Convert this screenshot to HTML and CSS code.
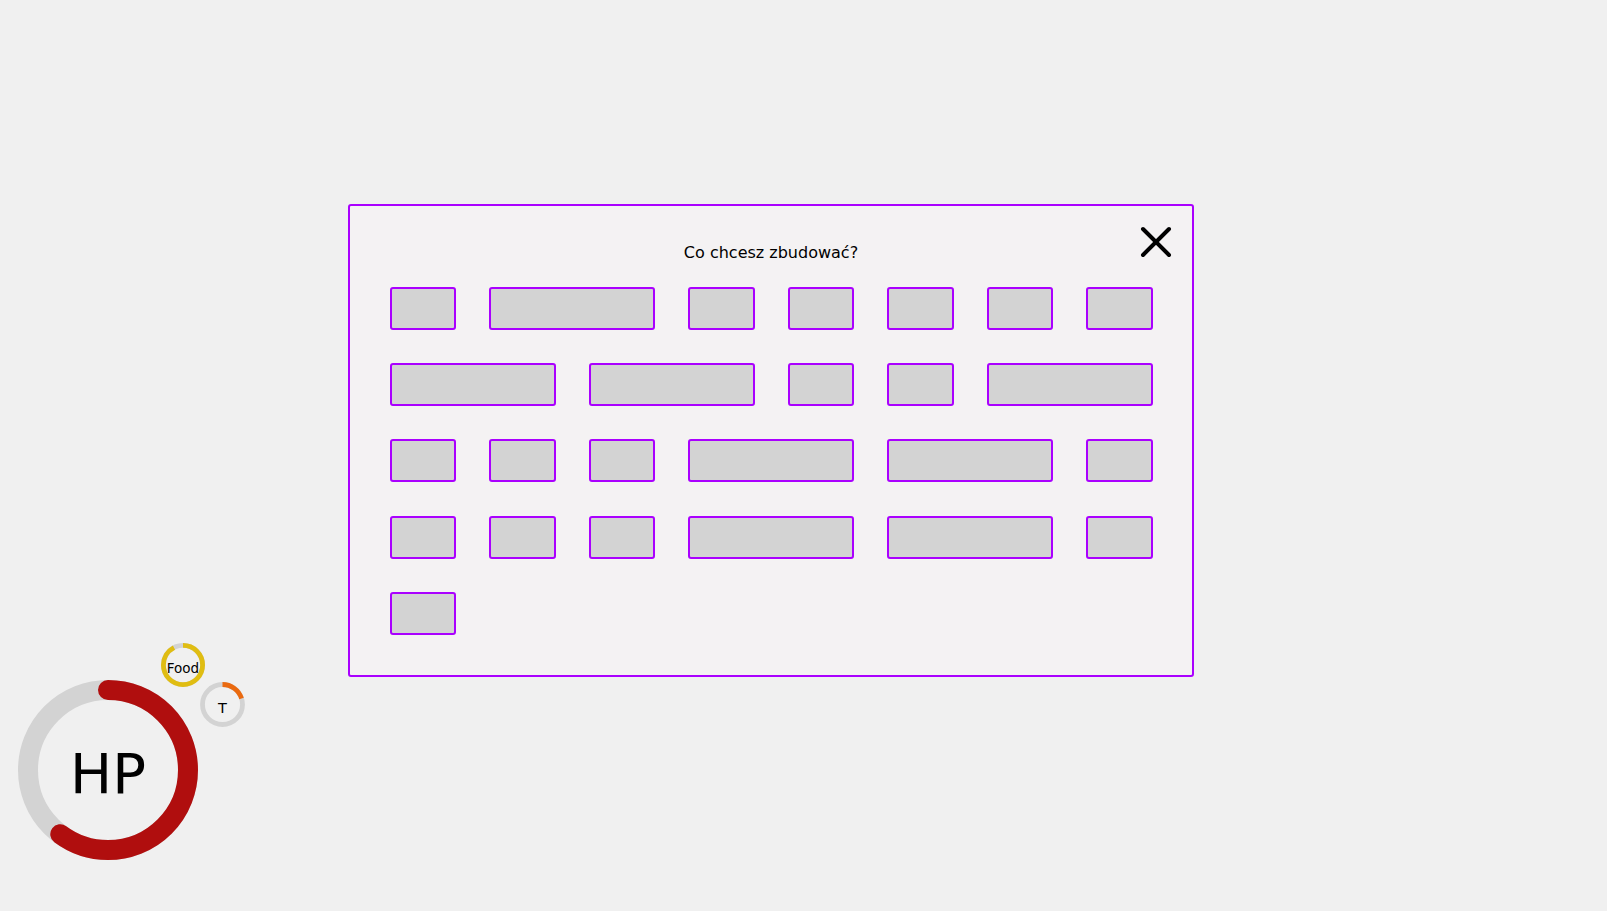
FILE: index.html
```html
<!DOCTYPE html>
<html>
    <head>
        <title>Budowanie</title>
        <link rel="stylesheet" href="styles.css">
    </head>
    <body>
    <div class="build">
        <button class="close" aria-label="Zamknij">
            <svg width="32" height="32" viewBox="0 0 32 32">
                <path d="M3 3 L29 29 M29 3 L3 29" stroke="#000" stroke-width="4" stroke-linecap="round" fill="none"/>
            </svg>
        </button>
        <p class="title">Co chcesz zbudować?</p>
        <div class="options">
            <button class="opt"></button>
            <button class="opt wide"></button>
            <button class="opt"></button>
            <button class="opt"></button>
            <button class="opt"></button>
            <button class="opt"></button>
            <button class="opt"></button>

            <button class="opt wide"></button>
            <button class="opt wide"></button>
            <button class="opt"></button>
            <button class="opt"></button>
            <button class="opt wide"></button>

            <button class="opt"></button>
            <button class="opt"></button>
            <button class="opt"></button>
            <button class="opt wide"></button>
            <button class="opt wide"></button>
            <button class="opt"></button>

            <button class="opt"></button>
            <button class="opt"></button>
            <button class="opt"></button>
            <button class="opt wide"></button>
            <button class="opt wide"></button>
            <button class="opt"></button>

            <button class="opt"></button>
        </div>
    </div>

    <div class="hud">
        <div class="ring hp">
            <svg width="180" height="180" viewBox="0 0 180 180">
                <circle cx="90" cy="90" r="80" stroke="#d3d3d3" stroke-width="20" fill="none"/>
                <circle cx="90" cy="90" r="80" stroke="#b00e0e" stroke-width="20" fill="none"
                    stroke-linecap="round" stroke-dasharray="302 600" transform="rotate(-90 90 90)"/>
            </svg>
            <span>HP</span>
        </div>
        <div class="ring food">
            <svg width="44" height="44" viewBox="0 0 44 44">
                <circle cx="22" cy="22" r="19.6" stroke="#d3d3d3" stroke-width="4.8" fill="none"/>
                <circle cx="22" cy="22" r="19.6" stroke="#e0bd12" stroke-width="4.8" fill="none"
                    stroke-dasharray="113 200" transform="rotate(-90 22 22)"/>
            </svg>
            <span>Food</span>
        </div>
        <div class="ring temp">
            <svg width="45" height="45" viewBox="0 0 45 45">
                <circle cx="22.5" cy="22.5" r="20" stroke="#d3d3d3" stroke-width="4.8" fill="none"/>
                <circle cx="22.5" cy="22.5" r="20" stroke="#ea6a10" stroke-width="4.8" fill="none"
                    stroke-dasharray="25 200" transform="rotate(-90 22.5 22.5)"/>
            </svg>
            <span>T</span>
        </div>
    </div>
    </body>
</html>
```

FILE: styles.css
```css
body{
    margin: 0;
    font-family: "DejaVu Sans", Verdana, sans-serif;
    background-color: #f0f0f0;
}
.build{
    position: relative;
    box-sizing: border-box;
    width: 846px;
    height: 473px;
    margin: 204px 0 0 348px;
    padding: 37px 0 0 0;
    background-color: #f4f2f3;
    border: 2px solid #a0f;
    border-radius: 3px;
}
.build .title{
    margin: 0 0 25px 0;
    font-size: 16px;
    line-height: 19px;
    text-align: center;
    color: #000;
}
.build .close{
    position: absolute;
    top: 19px;
    right: 19px;
    width: 34px;
    height: 34px;
    padding: 1px;
    border: none;
    background: none;
}
.options{
    display: grid;
    grid-template-columns: repeat(8, 66.5px);
    grid-auto-rows: 43px;
    column-gap: 33px;
    row-gap: 33.2px;
    justify-content: center;
}
.opt{
    box-sizing: border-box;
    margin: 0;
    border: 2px solid #a0f;
    border-radius: 3px;
    background-color: #d3d3d3;
}
.opt.wide{
    grid-column: span 2;
}
.hud{
    position: absolute;
    left: 0;
    top: 0;
}
.ring{
    position: absolute;
    display: flex;
    align-items: center;
    justify-content: center;
}
.ring svg{
    position: absolute;
    left: 0;
    top: 0;
}
.ring span{
    position: relative;
    color: #000;
}
.hp{
    left: 18px;
    top: 680px;
    width: 180px;
    height: 180px;
}
.hp span{
    font-size: 56px;
    top: 3px;
}
.food{
    left: 161px;
    top: 643px;
    width: 44px;
    height: 44px;
}
.food span{
    font-size: 13.5px;
    top: 3px;
}
.temp{
    left: 200px;
    top: 682px;
    width: 45px;
    height: 45px;
}
.temp span{
    font-size: 14.5px;
    top: 3px;
}
```
